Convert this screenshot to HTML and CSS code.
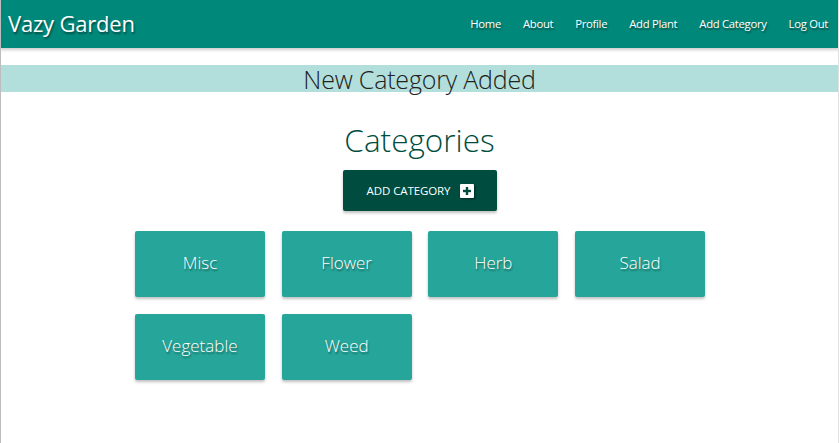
FILE: index.html
```html
<!DOCTYPE html>
<html>
<head>
<meta charset="utf-8">
<link rel="stylesheet" href="styles.css">
</head>
<body>
<nav class="navbar">
  <a class="brand" href="#">Vazy Garden</a>
  <ul class="nav-links">
    <li><a href="#">Home</a></li>
    <li><a href="#">About</a></li>
    <li><a href="#">Profile</a></li>
    <li><a href="#">Add Plant</a></li>
    <li><a href="#">Add Category</a></li>
    <li><a href="#">Log Out</a></li>
  </ul>
</nav>
<main class="page">
  <div class="flash">New Category Added</div>
  <h1 class="title">Categories</h1>
  <div class="actions">
    <a class="btn" href="#">ADD CATEGORY
      <svg class="plus" width="14" height="14" viewBox="0 0 14 14">
        <rect x="0" y="0" width="14" height="14" rx="1" fill="#ffffff"/>
        <rect x="5.8" y="3" width="2.4" height="8" fill="#004d40"/>
        <rect x="3" y="5.8" width="8" height="2.4" fill="#004d40"/>
      </svg>
    </a>
  </div>
  <div class="grid">
    <a class="card" href="#">Misc</a>
    <a class="card" href="#">Flower</a>
    <a class="card" href="#">Herb</a>
    <a class="card" href="#">Salad</a>
    <a class="card" href="#">Vegetable</a>
    <a class="card" href="#">Weed</a>
  </div>
</main>
</body>
</html>
```
FILE: styles.css
```css
* { box-sizing: border-box; }
html, body { margin: 0; padding: 0; height: 100%; }
body {
  font-family: "Open Sans", "Noto Sans", sans-serif;
  background: #ffffff;
  color: #212121;
  border-left: 1px solid #bdbdbd;
  border-right: 1px solid #e0e0e0;
}
a { text-decoration: none; color: inherit; }

.navbar {
  height: 48px;
  background: #00897b;
  display: flex;
  align-items: center;
  justify-content: space-between;
  padding: 0 0 0 8px;
  margin-left: -1px;
  margin-right: -1px;
  box-shadow: 0 2px 3px rgba(0,0,0,0.2);
  position: relative;
}
.brand {
  color: #ffffff;
  font-size: 22px;
  letter-spacing: -0.2px;
  text-shadow: 1px 2px 2px rgba(0,0,0,0.45);
  margin-top: -2px;
}
.nav-links {
  list-style: none;
  margin: 0;
  padding: 0;
  display: flex;
  height: 100%;
}
.nav-links li { display: flex; }
.nav-links a {
  display: flex;
  align-items: center;
  padding: 0 11px;
  color: #ffffff;
  font-size: 11.3px;
  letter-spacing: -0.3px;
  text-shadow: 1px 2px 2px rgba(0,0,0,0.45);
  margin-top: -2px;
}

.page { padding-top: 17px; }
.flash {
  background: #b2dfdb;
  height: 27px;
  line-height: 29px;
  text-align: center;
  font-size: 25px;
  font-weight: 300;
  letter-spacing: -0.2px;
  color: #212121;
  margin-left: -1px;
  margin-right: -1px;
}
.title {
  margin: 26px 0 0 0;
  text-align: center;
  font-size: 31.5px;
  line-height: 44px;
  font-weight: 300;
  color: #004d40;
}
.actions {
  display: flex;
  justify-content: center;
  margin-top: 8px;
}
.btn {
  width: 154px;
  height: 41px;
  background: #004d40;
  color: #ffffff;
  display: flex;
  align-items: center;
  justify-content: center;
  gap: 10px;
  font-size: 11.5px;
  letter-spacing: -0.1px;
  border-radius: 2px;
  box-shadow: 0 2px 3px rgba(0,0,0,0.25);
  padding-left: 2px;
}
.plus { filter: drop-shadow(1px 1px 1px rgba(0,0,0,0.5)); }

.grid {
  display: grid;
  grid-template-columns: repeat(4, 130px);
  gap: 17px 16.7px;
  justify-content: center;
  margin-top: 20px;
  padding-left: 1px;
}
.card {
  height: 66px;
  background: #26a69a;
  border-radius: 2px;
  box-shadow: 0 2px 3px rgba(0,0,0,0.25);
  display: flex;
  align-items: center;
  justify-content: center;
  color: #ffffff;
  font-size: 17px;
  font-weight: 300;
  text-shadow: 1px 2px 2px rgba(0,0,0,0.4);
  padding-bottom: 4px;
}
```
